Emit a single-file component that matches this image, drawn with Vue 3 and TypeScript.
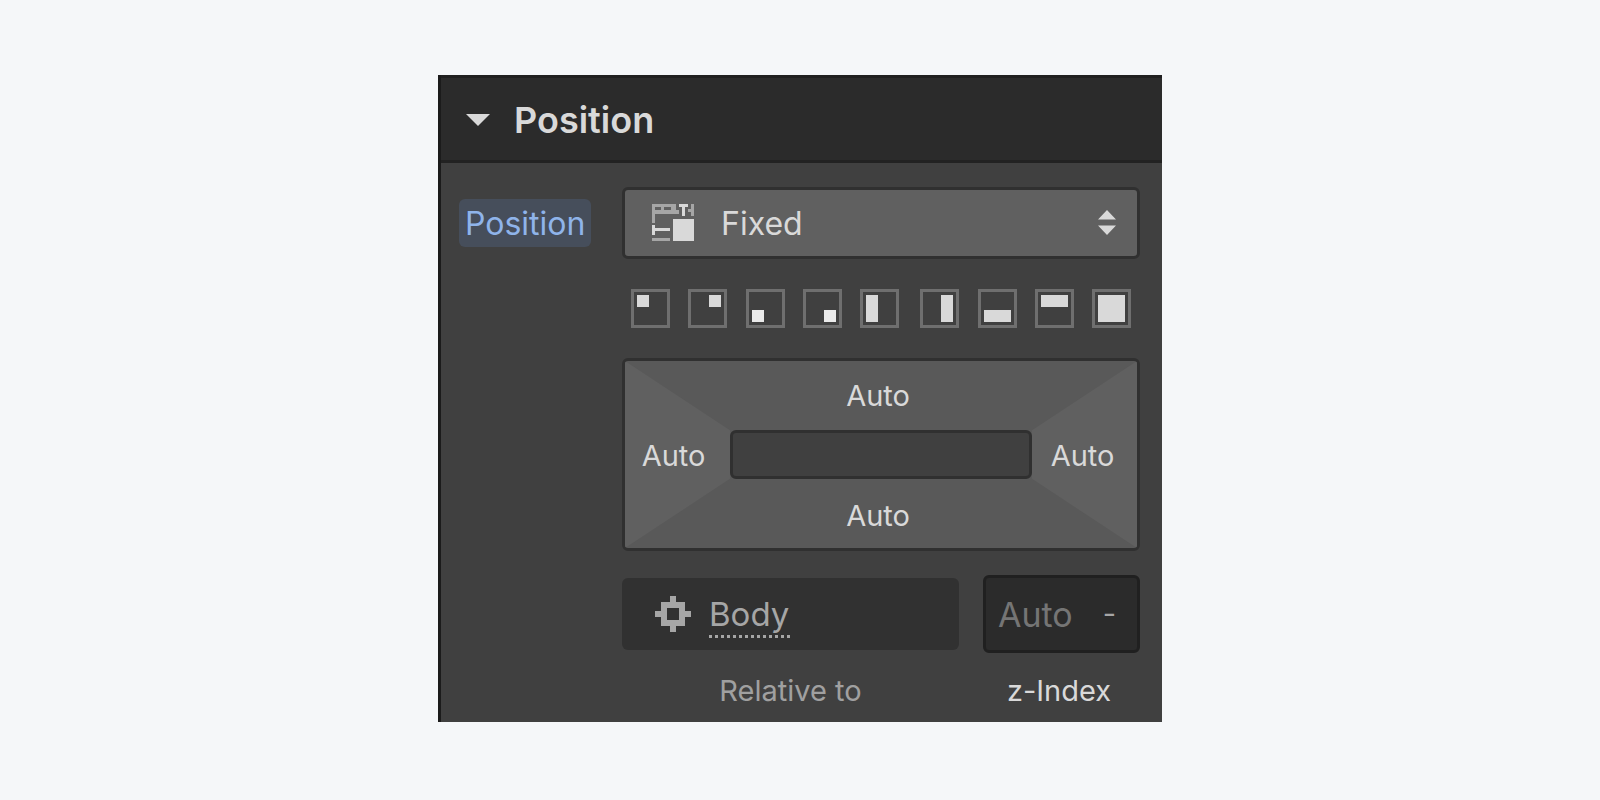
<script setup lang="ts">
import { ref } from 'vue'

interface Preset {
  name: string
  shape: string
}

const presets: Preset[] = [
  { name: 'Top left', shape: 'top-left' },
  { name: 'Top right', shape: 'top-right' },
  { name: 'Bottom left', shape: 'bottom-left' },
  { name: 'Bottom right', shape: 'bottom-right' },
  { name: 'Left', shape: 'left' },
  { name: 'Right', shape: 'right' },
  { name: 'Bottom', shape: 'low' },
  { name: 'Top', shape: 'high' },
  { name: 'Full', shape: 'full' },
]

const sides: string[] = ['top', 'left', 'right', 'bottom']
const position = ref('Fixed')
const zIndex = ref('Auto')
const open = ref(true)
</script>

<template>
  <main class="page">
    <section class="panel">
      <h2 class="header">
        <button type="button" class="toggle" :aria-expanded="open" @click="open = !open">
          <svg class="caret" viewBox="0 0 24 12" aria-hidden="true"><path d="M0 0h24L12 12z" /></svg>
          <span>Position</span>
        </button>
      </h2>

      <div v-if="open" class="body">
        <div class="label-cell">
          <label class="chip" for="position-select">Position</label>
        </div>

        <div class="fields">
          <div class="select-wrap">
            <select id="position-select" v-model="position" class="select">
              <option>Fixed</option>
            </select>
            <svg class="fixed-icon" viewBox="0 0 43 37" aria-hidden="true">
              <path class="dim" fill-rule="evenodd" d="M0 0h24v6h3v4H3v9H0zM3 3v3h6V3zM12 3v3h7V3zM39 0h3v12h-3V8h-3V5h3zM0 34h18v3H0z" />
              <path class="lit" d="M27 0h9v3h-3v9h-3V3h-3zM0 21h3v3h15v3H3v4H0zM21 15h21v22H21z" />
            </svg>
            <svg class="arrows" viewBox="0 0 18 25" aria-hidden="true">
              <path d="M9 0l9 9.500H0zM0 15.500h18L9 25z" />
            </svg>
          </div>

          <div class="presets">
            <button
              v-for="preset in presets"
              :key="preset.shape"
              type="button"
              class="preset"
              :class="preset.shape"
              :aria-label="preset.name"
            >
              <span class="mark"></span>
            </button>
          </div>

          <div class="offsets">
            <button
              v-for="side in sides"
              :key="side"
              type="button"
              class="side"
              :class="'side-' + side"
              :aria-label="side"
            >
              Auto
            </button>
            <div class="center"></div>
          </div>

          <div class="footer">
            <div class="relative">
              <div class="relative-box">
                <svg class="target" viewBox="0 0 36 36" aria-hidden="true">
                  <path fill-rule="evenodd" d="M15 0h6v6h9v9h6v6h-6v9h-9v6h-6v-6H6v-9H0v-6h6V6h9zM12 12v12h12V12z" />
                </svg>
                <a class="element" href="#body">Body</a>
              </div>
              <span class="caption muted">Relative to</span>
            </div>
            <div class="zindex">
              <div class="zindex-box">
                <input id="z-index" v-model="zIndex" class="zinput" type="text" />
                <button type="button" class="unit" aria-label="Unit">-</button>
              </div>
              <label class="caption" for="z-index">z-Index</label>
            </div>
          </div>
        </div>
      </div>
    </section>
  </main>
</template>

<style>
body {
  margin: 0;
  background: #f5f7f9;
}
</style>

<style scoped>
.page {
  box-sizing: border-box;
  min-height: 100vh;
  padding: 75px 24px;
  background: #f5f7f9;
  font-family: Inter, "Liberation Sans", sans-serif;
  color: #d9d9d9;
}

.page *,
.page *::before,
.page *::after {
  box-sizing: border-box;
}

button,
input,
select {
  margin: 0;
  padding: 0;
  border: 0;
  border-radius: 0;
  background: none;
  color: inherit;
  font: inherit;
  appearance: none;
}

svg {
  display: block;
  flex: none;
}

.panel {
  max-width: 724px;
  margin: 0 auto;
  border-left: 3px solid #1b1b1b;
  background: #404040;
}

.header {
  margin: 0;
  border-top: 3px solid #202020;
  border-bottom: 3px solid #222222;
  background: #2b2b2b;
}

.toggle {
  display: flex;
  align-items: center;
  gap: 24px;
  width: 100%;
  height: 82px;
  padding: 2px 0 0 25px;
  font-size: 36px;
  font-weight: 600;
  line-height: 44px;
}

.caret {
  width: 24px;
  height: 12px;
  fill: #d9d9d9;
}

.body {
  display: grid;
  grid-template-columns: 163px 1fr;
  padding: 24px 22px 13px 18px;
}

.label-cell {
  padding-top: 12px;
}

.chip {
  display: inline-block;
  height: 48px;
  padding: 0 6px;
  border-radius: 6px;
  background: #464e5b;
  color: #8fb4ea;
  font-size: 32px;
  line-height: 50px;
}

.fields {
  display: flex;
  flex-direction: column;
  min-width: 0;
}

.select-wrap {
  position: relative;
}

.select {
  display: block;
  width: 100%;
  height: 72px;
  padding-left: 96px;
  border: 3px solid #303030;
  border-radius: 6px;
  background: #606060;
  font-size: 32px;
}

.fixed-icon {
  position: absolute;
  top: 17px;
  left: 30px;
  width: 43px;
  height: 37px;
  pointer-events: none;
}

.dim {
  fill: #a6a6a6;
}

.lit {
  fill: #d9d9d9;
}

.arrows {
  position: absolute;
  top: 23px;
  right: 24px;
  width: 18px;
  height: 25px;
  fill: #d9d9d9;
  pointer-events: none;
}

.presets {
  display: flex;
  justify-content: space-between;
  padding: 30px 9px;
}

.preset {
  display: flex;
  width: 39px;
  height: 39px;
  padding: 3px;
  border: 3px solid #6f6f6f;
}

.preset:nth-child(5) {
  margin-right: 3px;
}

.mark {
  width: 12px;
  height: 12px;
  background: #d9d9d9;
}

.top-right,
.bottom-right,
.right {
  justify-content: flex-end;
}

.bottom-left,
.bottom-right,
.low {
  align-items: flex-end;
}

.bottom-left .mark,
.bottom-right .mark {
  background: #ebebeb;
}

.left .mark,
.right .mark,
.full .mark {
  height: 27px;
}

.low .mark,
.high .mark,
.full .mark {
  width: 27px;
}

.offsets {
  display: grid;
  grid-template-columns: 105px 1fr 105px;
  grid-template-rows: 69px 49px 69px;
  overflow: hidden;
  border: 3px solid #303030;
  border-radius: 6px;
  background: #595959;
}

.side {
  font-size: 29px;
  line-height: 36px;
}

.side-top {
  grid-area: 1 / 2;
}

.side-bottom {
  grid-area: 3 / 2;
  padding-top: 4px;
}

.side-top,
.side-bottom {
  padding-right: 6px;
}

.side-left {
  grid-area: 1 / 1 / 4 / 2;
  padding: 2px 8px 0 0;
  background: #606060;
  clip-path: polygon(0 0, 100% 37%, 100% 63%, 0 100%);
}

.side-right {
  grid-area: 1 / 3 / 4 / 4;
  padding: 2px 4px 0 0;
  background: #606060;
  clip-path: polygon(100% 0, 0 37%, 0 63%, 100% 100%);
}

.center {
  grid-area: 2 / 2;
  border: 3px solid #303030;
  border-radius: 6px;
  background: #404040;
}

.footer {
  display: flex;
  gap: 24px;
  margin-top: 24px;
}

.relative,
.zindex {
  display: flex;
  flex-direction: column;
  align-items: center;
}

.relative {
  flex: 1;
  padding-top: 3px;
}

.relative-box {
  display: flex;
  align-items: center;
  gap: 18px;
  width: 100%;
  height: 72px;
  margin-bottom: 3px;
  padding-left: 33px;
  border-radius: 6px;
  background: #313131;
  color: #a6a6a6;
}

.target {
  width: 36px;
  height: 36px;
  fill: #a6a6a6;
}

.element {
  padding: 2px 2px 3px 0;
  background: repeating-linear-gradient(to right, #a6a6a6 0 3px, transparent 3px 6px) left bottom / 100% 3px no-repeat;
  color: inherit;
  font-size: 33px;
  line-height: 42px;
  text-decoration: none;
}

.zindex {
  width: 157px;
}

.zindex-box {
  display: flex;
  align-items: center;
  width: 100%;
  height: 78px;
  padding: 0 21px 0 12px;
  border: 3px solid #202020;
  border-radius: 6px;
  background: #2b2b2b;
}

.zinput {
  flex: 1;
  min-width: 0;
  color: #757575;
  font-size: 34px;
}

.unit {
  color: #a6a6a6;
  font-size: 29px;
  line-height: 36px;
}

.caption {
  margin-top: 20px;
  font-size: 29px;
  line-height: 36px;
}

.zindex .caption {
  padding-right: 5px;
}

.muted {
  color: #a0a0a0;
}
</style>
